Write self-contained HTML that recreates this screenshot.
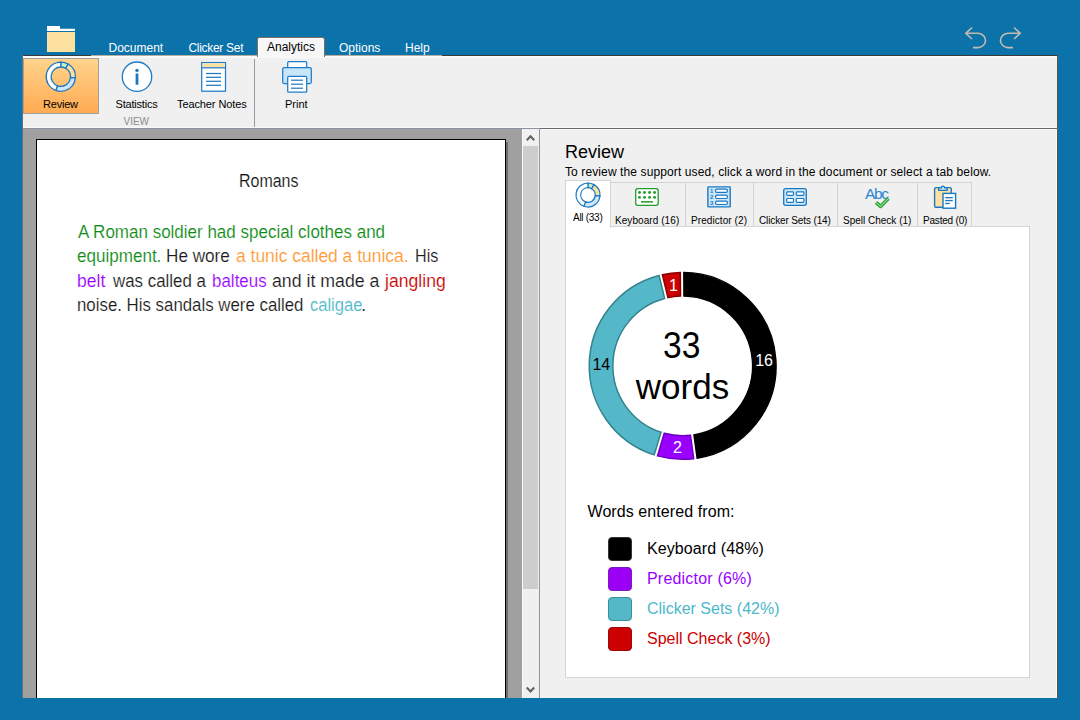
<!DOCTYPE html>
<html><head><meta charset="utf-8">
<style>
*{margin:0;padding:0;box-sizing:border-box}
html,body{width:1080px;height:720px;overflow:hidden}
body{background:#0b72aa;font-family:"Liberation Sans",sans-serif;position:relative;color:#000}
.a{position:absolute;white-space:nowrap;line-height:1}
svg{position:absolute;overflow:visible}
.d{position:absolute;white-space:nowrap;line-height:1;font-size:17.6px;transform-origin:0 0;-webkit-text-stroke:0.15px #fff}
</style></head><body>

<!-- folder icon -->
<svg style="left:0;top:0" width="1080" height="60">
  <rect x="47" y="26" width="13" height="4" fill="#fff"/>
  <rect x="47" y="28.7" width="28" height="2.3" rx="0.6" fill="#fff"/>
  <rect x="47" y="32" width="28" height="20" fill="#fde1a0"/>
  <!-- undo -->
  <g fill="none" stroke="#c4bcae" stroke-width="1.6">
    <path d="M972 27.5 L965.8 33.3 L972 39"/>
    <path d="M966 33.3 H978.3 A8.2 7.2 0 0 1 978.3 47.6 H973"/>
    <path d="M1014 27.5 L1020.2 33.3 L1014 39"/>
    <path d="M1020 33.3 H1007.7 A8.2 7.2 0 0 0 1007.7 47.6 H1013"/>
  </g>
</svg>

<!-- menu tabs -->
<div class="a" style="left:108.5px;top:42px;font-size:12px;color:#fff">Document</div>
<div class="a" style="left:188.5px;top:42px;font-size:12px;letter-spacing:-0.3px;color:#fff">Clicker Set</div>
<div class="a" style="left:339px;top:42px;font-size:12px;color:#fff">Options</div>
<div class="a" style="left:405px;top:42px;font-size:12px;color:#fff">Help</div>

<!-- ribbon -->
<div style="position:absolute;left:22px;top:55px;width:1036px;height:74px;background:#f0f0f0;border-top:1px solid #3a3a3a;border-right:1px solid #5a5252;border-bottom:1px solid #8c94a0"></div>
<div style="position:absolute;left:91px;top:55px;width:351px;height:1px;background:#b8aca0"></div>
<div style="position:absolute;left:22px;top:56px;width:1035px;height:2px;background:#fafafa"></div>

<!-- analytics tab -->
<div style="position:absolute;left:257px;top:37px;width:68px;height:20px;background:#f7f7f7;border:1px solid #7a6e66;border-bottom:none;border-radius:2.5px 2.5px 0 0;box-shadow:inset 1px 1px 0 #fff"></div>
<div class="a" style="left:267px;top:41px;font-size:12px;color:#000">Analytics</div>

<!-- review button -->
<div style="position:absolute;left:23px;top:58px;width:76px;height:56px;background:linear-gradient(#ffd38c,#ffab52);border:1px solid #a0a0a0"></div>


<!-- ribbon icons -->
<svg style="left:0;top:0" width="400" height="130">
  <!-- review donut -->
  <g transform="translate(60.8,76.7)" stroke="#1a78c2" stroke-width="1.3">
    <path d="M0 -14.6 A14.6 14.6 0 0 1 7.3 -12.64 L4.85 -8.4 A9.7 9.7 0 0 0 0 -9.7 Z" fill="#c8f0c8"/>
    <path d="M7.3 -12.64 A14.6 14.6 0 0 1 14.54 1.27 L9.66 0.85 A9.7 9.7 0 0 0 4.85 -8.4 Z" fill="#fde1a0"/>
    <path d="M14.54 1.27 A14.6 14.6 0 0 1 -4.99 13.72 L-3.32 9.11 A9.7 9.7 0 0 0 9.66 0.85 Z" fill="#cfe6fa"/>
    <path d="M-4.99 13.72 A14.6 14.6 0 0 1 0 -14.6 L0 -9.7 A9.7 9.7 0 0 0 -3.32 9.11 Z" fill="#fff"/>
  </g>
  <!-- statistics -->
  <circle cx="137" cy="76.7" r="14.7" fill="#fff" stroke="#1e7cc8" stroke-width="1.3"/>
  <circle cx="137" cy="70.4" r="1.7" fill="#1a78c2"/>
  <rect x="135.6" y="73.5" width="2.8" height="11.2" fill="#1a78c2"/>
  <!-- teacher notes -->
  <rect x="201.7" y="62.6" width="23.8" height="28.6" fill="#fff" stroke="#1e7cc8" stroke-width="1.25"/>
  <rect x="202.5" y="63.3" width="22.2" height="4" fill="#fde1a0"/>
  <rect x="201.8" y="67.2" width="23.6" height="1.2" fill="#1a78c2"/>
  <g fill="#1a78c2">
    <rect x="206" y="72.9" width="15" height="1.2"/>
    <rect x="206" y="76.7" width="15" height="1.2"/>
    <rect x="206" y="80.7" width="15" height="1.2"/>
    <rect x="206" y="84.7" width="15" height="1.2"/>
  </g>
  <!-- print -->
  <g stroke="#1e7cc8" stroke-width="1.25">
    <rect x="287.7" y="61.7" width="19" height="6.5" rx="1" fill="#fff"/>
    <rect x="282.7" y="67.5" width="28.6" height="16" rx="1.5" fill="#c8e6fa"/>
    <rect x="287.7" y="76.4" width="19" height="15.8" rx="1" fill="#fff"/>
  </g>
  <g fill="#1a78c2">
    <rect x="291" y="79.6" width="12" height="1.2"/>
    <rect x="291" y="83.6" width="12" height="1.2"/>
    <rect x="291" y="87.6" width="12" height="1.2"/>
  </g>
  <rect x="254" y="59" width="1" height="69" fill="#9a9a9a"/>
</svg>
<div class="a" style="left:43px;top:99px;font-size:11px;letter-spacing:-0.2px;color:#000">Review</div>
<div class="a" style="left:115.5px;top:99px;letter-spacing:-0.2px;font-size:11px;color:#000">Statistics</div>
<div class="a" style="left:177px;top:99px;letter-spacing:-0.1px;font-size:11px;color:#000">Teacher Notes</div>
<div class="a" style="left:285px;top:99px;font-size:11px;color:#000">Print</div>
<div class="a" style="left:123.5px;top:117px;font-size:10px;color:#8c8c8c">VIEW</div>


<!-- left document area -->
<div style="position:absolute;left:22px;top:129px;width:500px;height:569px;background:#a0a0a0"></div>
<div style="position:absolute;left:506px;top:142px;width:2px;height:556px;background:#6e6e6e"></div>
<div style="position:absolute;left:36px;top:139px;width:470.2px;height:559px;background:#fff;border:1.5px solid #000;border-bottom:none"></div>
<div class="d" style="left:239.1px;top:173px;transform:scaleX(0.908);color:#111">Romans</div>
<div class="d" style="left:78.3px;top:224px;transform:scaleX(0.966);color:#0c8a14">A Roman soldier had special clothes and</div>
<div class="d" style="left:77.3px;top:248px;transform:scaleX(0.969);color:#0c8a14">equipment.</div>
<div class="d" style="left:166.2px;top:248px;transform:scaleX(0.975);color:#1a1a1a">He wore</div>
<div class="d" style="left:235.7px;top:248px;transform:scaleX(0.991);color:#ff9933">a tunic called a tunica.</div>
<div class="d" style="left:414.5px;top:248px;transform:scaleX(0.917);color:#1a1a1a">His</div>
<div class="d" style="left:77.3px;top:273px;transform:scaleX(0.996);color:#9a00ff">belt</div>
<div class="d" style="left:113.0px;top:273px;transform:scaleX(0.959);color:#1a1a1a">was called a</div>
<div class="d" style="left:211.6px;top:273px;transform:scaleX(0.964);color:#9a00ff">balteus</div>
<div class="d" style="left:271.8px;top:273px;transform:scaleX(1.008);color:#1a1a1a">and it made a</div>
<div class="d" style="left:384.8px;top:273px;transform:scaleX(1.002);color:#cc0000">jangling</div>
<div class="d" style="left:77.3px;top:297px;transform:scaleX(0.957);color:#1a1a1a">noise. His sandals were called</div>
<div class="d" style="left:309.6px;top:297px;transform:scaleX(0.939);color:#4cb8ca">caligae</div>
<div class="d" style="left:361.2px;top:297px;transform:scaleX(1.067);color:#1a1a1a">.</div>

<!-- scrollbar -->
<div style="position:absolute;left:522px;top:129px;width:17px;height:569px;background:#f0f0f0;border-left:1px solid #fafafa"></div>
<div style="position:absolute;left:523px;top:146px;width:15px;height:443px;background:#cdcdcd"></div>
<svg style="left:0;top:0" width="600" height="720">
  <path d="M526.8 140.3 L530.5 136.3 L534.2 140.3" fill="none" stroke="#606060" stroke-width="2"/>
  <path d="M526.8 687.5 L530.5 691.5 L534.2 687.5" fill="none" stroke="#606060" stroke-width="2"/>
</svg>
<div style="position:absolute;left:539px;top:129px;width:1px;height:569px;background:#8c94a0"></div>

<!-- right panel -->
<div style="position:absolute;left:540px;top:129px;width:517px;height:569px;background:#f0f0f0"></div>
<div style="position:absolute;left:1057px;top:129px;width:1px;height:569px;background:#5a5252"></div>

<div style="position:absolute;left:540px;top:128px;width:517px;height:1px;background:#6a6a6a"></div>
<div style="position:absolute;left:540px;top:129px;width:516px;height:1px;background:#fafafa"></div>
<div style="position:absolute;left:1056px;top:129px;width:1px;height:569px;background:#fafafa"></div>
<div style="position:absolute;left:22px;top:127px;width:1035px;height:1px;background:#fafafa"></div>
<div class="a" style="left:565px;top:143px;font-size:18px;color:#000">Review</div>
<div class="a" style="left:565px;top:166px;font-size:12px;letter-spacing:0.11px;color:#000">To review the support used, click a word in the document or select a tab below.</div>


<!-- tabs row -->
<div style="position:absolute;left:610px;top:182px;width:362px;height:45px;border:1px solid #d4d4d4;border-left:none;background:#f0f0f0"></div>
<div style="position:absolute;left:685px;top:182px;width:1px;height:44px;background:#d4d4d4"></div>
<div style="position:absolute;left:753px;top:182px;width:1px;height:44px;background:#d4d4d4"></div>
<div style="position:absolute;left:837px;top:182px;width:1px;height:44px;background:#d4d4d4"></div>
<div style="position:absolute;left:917px;top:182px;width:1px;height:44px;background:#d4d4d4"></div>
<!-- content panel -->
<div style="position:absolute;left:565px;top:226px;width:465px;height:452px;background:#fff;border:1px solid #d4d4d4"></div>
<!-- selected tab -->
<div style="position:absolute;left:565px;top:180px;width:46px;height:48px;background:#fff;border:1px solid #d4d4d4;border-bottom:none"></div>

<div class="a" style="left:573px;top:213.3px;font-size:10px;letter-spacing:-0.28px;color:#000">All (33)</div>
<div class="a" style="left:615px;top:215.8px;font-size:10px;letter-spacing:0.07px;color:#000">Keyboard (16)</div>
<div class="a" style="left:691px;top:215.8px;font-size:10px;letter-spacing:0.08px;color:#000">Predictor (2)</div>
<div class="a" style="left:759px;top:215.8px;font-size:10px;letter-spacing:-0.13px;color:#000">Clicker Sets (14)</div>
<div class="a" style="left:843px;top:215.8px;font-size:10px;color:#000">Spell Check (1)</div>
<div class="a" style="left:923px;top:215.8px;font-size:10px;letter-spacing:-0.2px;color:#000">Pasted (0)</div>

<svg style="left:0;top:0" width="1080" height="720">
  <!-- all donut -->
  <g transform="translate(588,195)" stroke="#1a78c2" stroke-width="1.2">
    <path d="M0 -12 A12 12 0 0 1 6 -10.39 L3.65 -6.32 A7.3 7.3 0 0 0 0 -7.3 Z" fill="#c8f0c8"/>
    <path d="M6 -10.39 A12 12 0 0 1 11.95 1.05 L7.27 0.64 A7.3 7.3 0 0 0 3.65 -6.32 Z" fill="#fde1a0"/>
    <path d="M11.95 1.05 A12 12 0 0 1 -4.1 11.28 L-2.5 6.86 A7.3 7.3 0 0 0 7.27 0.64 Z" fill="#cfe6fa"/>
    <path d="M-4.1 11.28 A12 12 0 0 1 0 -12 L0 -7.3 A7.3 7.3 0 0 0 -2.5 6.86 Z" fill="#fff"/>
  </g>
  <!-- keyboard -->
  <rect x="635.7" y="188.7" width="22.5" height="16.6" rx="2.2" fill="#fff" stroke="#1e9e2a" stroke-width="1.3"/>
  <g fill="#1e9e2a">
    <circle cx="639.5" cy="192.5" r="1.45"/><circle cx="644.5" cy="192.5" r="1.45"/><circle cx="649.6" cy="192.5" r="1.45"/><circle cx="654.6" cy="192.5" r="1.45"/>
    <circle cx="639.5" cy="197.4" r="1.45"/><circle cx="644.5" cy="197.4" r="1.45"/><circle cx="649.6" cy="197.4" r="1.45"/><circle cx="654.6" cy="197.4" r="1.45"/>
    <rect x="641" y="201.1" width="12" height="1.5"/>
  </g>
  <!-- predictor -->
  <rect x="707.9" y="186.9" width="22.3" height="20" rx="0.6" fill="#cce8f8" stroke="#1a78c2" stroke-width="1.4"/>
  <g stroke="#1a78c2" stroke-width="1.2" fill="#fff">
    <rect x="715.6" y="189.1" width="11.8" height="3.3" rx="1.2"/>
    <rect x="715.6" y="195.2" width="11.8" height="3.3" rx="1.2"/>
    <rect x="715.6" y="201.2" width="11.8" height="3.3" rx="1.2"/>
  </g>
  <g fill="#1a78c2" font-family="Liberation Sans" font-size="6" font-weight="bold">
    <text x="709.9" y="193.2">1</text><text x="709.9" y="199.3">2</text><text x="709.9" y="205.2">3</text>
  </g>
  <!-- clicker sets -->
  <rect x="783.7" y="188.7" width="22.6" height="16.6" rx="2" fill="#cce8f8" stroke="#1a78c2" stroke-width="1.3"/>
  <g stroke="#1a78c2" stroke-width="1.2" fill="#fff">
    <rect x="786.7" y="191.9" width="6.8" height="3.4" rx="0.8"/>
    <rect x="796.3" y="191.9" width="7.6" height="3.4" rx="0.8"/>
    <rect x="786.7" y="198.5" width="6.8" height="3.8" rx="0.8"/>
    <rect x="796.3" y="198.5" width="7.6" height="3.8" rx="0.8"/>
  </g>
  <!-- spell check -->
  <text x="865" y="198.8" font-family="Liberation Sans" font-size="15.5" fill="#2a86d0" letter-spacing="-1.3">Abc</text>
  <path d="M876 202.4 L880.5 206.4 L888.4 198.4" fill="none" stroke="#2aa03a" stroke-width="3.6" stroke-linejoin="round"/>
  <path d="M876 202.4 L880.5 206.4 L888.4 198.4" fill="none" stroke="#8ee08e" stroke-width="1.2" stroke-linejoin="round"/>
  <!-- pasted -->
  <rect x="934.6" y="187.6" width="16.6" height="19.6" rx="1.2" fill="#fde1a0" stroke="#1a78c2" stroke-width="1.4"/>
  <path d="M938.6 190.3 V187.8 H941.4 A1.6 1.6 0 0 1 944.6 187.8 H947.2 V190.3 Z" fill="#cfe6fa" stroke="#1a78c2" stroke-width="1.3"/>
  <rect x="943" y="193.4" width="12.6" height="14.8" fill="#fff" stroke="#1a78c2" stroke-width="1.4"/>
  <g fill="#1a78c2">
    <rect x="945.2" y="197" width="7.6" height="1.3"/>
    <rect x="945.2" y="199.9" width="7.6" height="1.3"/>
    <rect x="945.2" y="202.8" width="4.6" height="1.3"/>
  </g>
</svg>

<!-- chart -->
<svg style="left:0;top:0" width="1080" height="720">
  <path d="M683.75 272.46 A93.45 93.45 0 0 1 697.06 458.24 L693.86 434.85 A69.85 69.85 0 0 0 683.91 296.06 Z" fill="#000" stroke="#000" stroke-width="1.3"/>
  <path d="M693.70 458.70 A93.45 93.45 0 0 1 657.48 455.88 L664.26 433.27 A69.85 69.85 0 0 0 690.49 435.31 Z" fill="#9900ff" stroke="#6e00c0" stroke-width="1.5"/>
  <path d="M654.22 454.91 A93.45 93.45 0 0 1 659.08 275.48 L664.63 298.43 A69.85 69.85 0 0 0 661.01 432.30 Z" fill="#55b8c8" stroke="#33838f" stroke-width="1.5"/>
  <path d="M662.38 274.69 A93.45 93.45 0 0 1 680.35 272.48 L680.51 296.08 A69.85 69.85 0 0 0 667.93 297.63 Z" fill="#cc0000" stroke="#8a0000" stroke-width="1.5"/>
  <g font-family="Liberation Sans" text-anchor="middle">
    <text x="673.5" y="290.8" font-size="16" fill="#fff">1</text>
    <text x="764.1" y="366" font-size="16" fill="#fff">16</text>
    <text x="677.4" y="452.8" font-size="16" fill="#fff">2</text>
    <text x="601.3" y="370" font-size="16" fill="#000">14</text>
    <text transform="translate(681.7,358.1) scale(0.92,1)" font-size="36.5" fill="#000">33</text>
    <text x="682.5" y="399.4" font-size="35" fill="#000">words</text>
  </g>
</svg>


<div class="a" style="left:587.5px;top:504px;font-size:16px;letter-spacing:0.08px;color:#000">Words entered from:</div>
<div style="position:absolute;left:608px;top:537px;width:24px;height:24px;border-radius:4px;background:#000;border:1px solid #333"></div>
<div style="position:absolute;left:608px;top:567px;width:24px;height:24px;border-radius:4px;background:#9b00f5;border:1px solid #7a1ab8"></div>
<div style="position:absolute;left:608px;top:597px;width:24px;height:24px;border-radius:4px;background:#55b8c8;border:1px solid #3a8f9c"></div>
<div style="position:absolute;left:608px;top:627px;width:24px;height:24px;border-radius:4px;background:#cc0000;border:1px solid #9a0a0a"></div>
<div class="a" style="left:647px;top:540.8px;font-size:16px;letter-spacing:0.1px;color:#000">Keyboard (48%)</div>
<div class="a" style="left:647px;top:570.8px;font-size:16px;letter-spacing:0.2px;color:#9900ff">Predictor (6%)</div>
<div class="a" style="left:647px;top:600.8px;font-size:16px;color:#4cb8ca">Clicker Sets (42%)</div>
<div class="a" style="left:647px;top:630.8px;font-size:16px;color:#cc0000">Spell Check (3%)</div>

<div style="position:absolute;left:22px;top:55px;width:1px;height:643px;background:#6e6e6e"></div>
</body></html>
